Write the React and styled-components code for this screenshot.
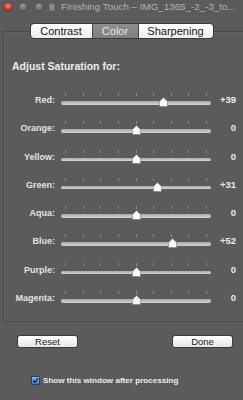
import React from "react";
import styled, { createGlobalStyle } from "styled-components";

const GlobalStyle = createGlobalStyle`
  html, body { margin: 0; padding: 0; }
  body {
    background: #5b5b5b;
    width: 243px;
    height: 400px;
    overflow: hidden;
    font-family: "Liberation Sans", Arial, sans-serif;
  }
`;

const Window = styled.div`
  width: 243px;
  height: 400px;
  display: flex;
  flex-direction: column;
  background: #5b5b5b;
`;

const TitleBar = styled.div`
  height: 13px;
  display: flex;
  align-items: center;
  padding: 0 0 0 4px;
  flex-shrink: 0;
`;

const Light = styled.span`
  width: 8px;
  height: 8px;
  border-radius: 50%;
  margin-right: ${(p) => p.$gap}px;
  background: ${(p) =>
    p.$red
      ? "radial-gradient(circle at 50% 35%, #ff8a7a 0%, #d8352a 55%, #8e1a14 100%)"
      : "radial-gradient(circle at 50% 35%, #9a9a9a 0%, #6e6e6e 60%, #4c4c4c 100%)"};
  box-shadow: 0 0 0 0.5px #3c3c3c;
`;

const DocIcon = styled.svg`
  width: 6px;
  height: 8px;
  margin-right: 6px;
`;

const Title = styled.span`
  font-size: 9.8px;
  color: #b4b4b4;
  white-space: nowrap;
  overflow: hidden;
`;

const SegWrap = styled.div`
  display: flex;
  justify-content: center;
  margin-top: 10px;
  margin-bottom: -8px;
  position: relative;
  z-index: 1;
`;

const Segmented = styled.div`
  display: flex;
  height: 14px;
  border: 1px solid #3a3a3a;
  border-radius: 4px;
  overflow: hidden;
  background: linear-gradient(#ffffff, #ececec);
`;

const Segment = styled.div`
  width: ${(p) => p.$w}px;
  display: flex;
  align-items: center;
  justify-content: center;
  font-size: 11px;
  color: ${(p) => (p.$active ? "#e4e4e4" : "#151515")};
  background: ${(p) => (p.$active ? "linear-gradient(#8e8e8e, #7f7f7f)" : "transparent")};
  border-left: ${(p) => (p.$first ? "none" : "1px solid #4a4a4a")};
`;

const Panel = styled.div`
  margin-left: 3px;
  border-top: 1px solid #4a4a4a;
  border-left: 1px solid #4a4a4a;
  border-bottom: 1px solid #4a4a4a;
  box-shadow: inset 1px 1px 0 #646464;
  padding: 27px 0 8.6px 0;
`;

const Heading = styled.div`
  height: 14px;
  line-height: 14px;
  margin-left: 8px;
  margin-bottom: 13px;
  font-size: 10.5px;
  font-weight: bold;
  color: #ececec;
`;

const Row = styled.div`
  height: 28.3px;
  display: grid;
  grid-template-columns: 51px 150px 19px;
  column-gap: 6px;
  position: relative;
`;

const Label = styled.div`
  margin-top: 8px;
  height: 12px;
  line-height: 12px;
  text-align: right;
  font-size: 9px;
  font-weight: bold;
  color: #e2e2e2;
`;

const Value = styled(Label)`
  color: #ececec;
  font-size: 9.5px;
`;

const SliderArea = styled.div`
  position: relative;
`;

const Ticks = styled.div`
  position: absolute;
  top: 7px;
  left: 4px;
  right: 4px;
  height: 3px;
  display: flex;
  justify-content: space-between;
`;

const Tick = styled.span`
  width: 1px;
  height: 3px;
  background: #8c8c8c;
`;

const Track = styled.div`
  position: absolute;
  top: 15px;
  left: 0;
  right: 0;
  height: 3.5px;
  border-radius: 2px;
  background: linear-gradient(#a9a9a9, #d4d4d4);
`;

const Thumb = styled.svg`
  position: absolute;
  top: 11px;
  width: 9px;
  height: 10px;
`;

const ButtonRow = styled.div`
  display: flex;
  justify-content: space-between;
  margin-top: 13px;
  padding: 0 10px 0 17px;
`;

const Button = styled.div`
  width: 59px;
  height: 11px;
  border: 1px solid #3c3c3c;
  border-radius: 3px;
  background: linear-gradient(#ffffff, #e6e6e6);
  display: flex;
  align-items: center;
  justify-content: center;
  font-size: 9.5px;
  color: #1a1a1a;
`;

const CheckRow = styled.div`
  display: flex;
  align-items: center;
  margin-top: 27px;
  padding-left: 31px;
  height: 12px;
`;

const CheckBox = styled.span`
  width: 7px;
  height: 7px;
  border: 0.5px solid #203a6a;
  border-radius: 1.5px;
  background: linear-gradient(#8ab4ee, #3a74d0);
  display: flex;
  align-items: center;
  justify-content: center;
  margin-right: 3px;
`;

const CheckText = styled.span`
  font-size: 8.1px;
  font-weight: bold;
  color: #ececec;
`;

const rows = [
  ["Red", 39],
  ["Orange", 0],
  ["Yellow", 0],
  ["Green", 31],
  ["Aqua", 0],
  ["Blue", 52],
  ["Purple", 0],
  ["Magenta", 0],
];

function Slider({ value }) {
  const left = ((value + 100) / 200) * 141;
  return (
    <SliderArea>
      <Ticks>
        {Array.from({ length: 9 }).map((_, i) => (
          <Tick key={i} />
        ))}
      </Ticks>
      <Track />
      <Thumb viewBox="0 0 9 10" style={{ left: `${left}px` }}>
        <path
          d="M4.5 0.5 L8.5 4.5 L8.5 9.5 L0.5 9.5 L0.5 4.5 Z"
          fill="#fafafa"
          stroke="#7a7a7a"
          strokeWidth="0.6"
        />
      </Thumb>
    </SliderArea>
  );
}

export default function App() {
  return (
    <>
      <GlobalStyle />
      <Window>
        <TitleBar>
          <Light $red $gap={7} />
          <Light $gap={8} />
          <Light $gap={6} />
          <DocIcon viewBox="0 0 6 8">
            <path d="M0.5 0.5 H4 L5.5 2 V7.5 H0.5 Z" fill="#8a8a8a" stroke="#777" strokeWidth="0.5" />
          </DocIcon>
          <Title>Finishing Touch – IMG_1365_-2_-3_to...</Title>
        </TitleBar>
        <SegWrap>
          <Segmented>
            <Segment $first $w={61}>Contrast</Segment>
            <Segment $active $w={45}>Color</Segment>
            <Segment $w={74}>Sharpening</Segment>
          </Segmented>
        </SegWrap>
        <Panel>
          <Heading>Adjust Saturation for:</Heading>
          {rows.map(([name, v]) => (
            <Row key={name}>
              <Label>{name}:</Label>
              <Slider value={v} />
              <Value>{v > 0 ? `+${v}` : v}</Value>
            </Row>
          ))}
        </Panel>
        <ButtonRow>
          <Button>Reset</Button>
          <Button>Done</Button>
        </ButtonRow>
        <CheckRow>
          <CheckBox>
            <svg viewBox="0 0 8 8" width="7" height="7">
              <path d="M1.3 4 L3.2 6 L6.8 1.3" fill="none" stroke="#10203a" strokeWidth="1.4" />
            </svg>
          </CheckBox>
          <CheckText>Show this window after processing</CheckText>
        </CheckRow>
      </Window>
    </>
  );
}
